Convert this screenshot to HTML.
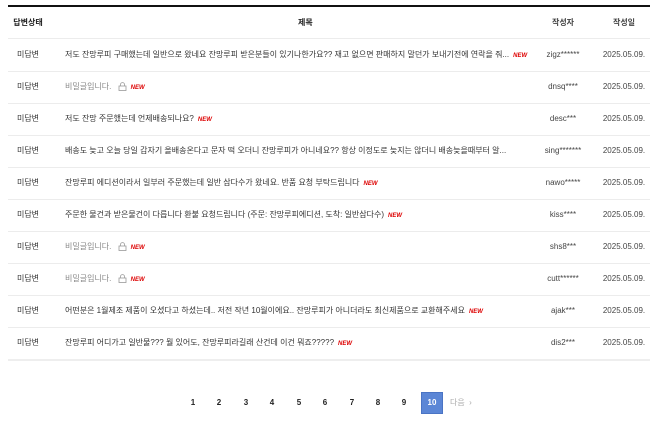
<!DOCTYPE html><html><head><meta charset="utf-8"><style>
body{margin:0;width:658px;height:426px;background:#fff;font-family:"Liberation Sans","Noto Sans CJK KR",sans-serif;color:#333;position:relative;overflow:hidden}
.top{position:absolute;left:8px;top:5px;width:642px;height:2px;background:#111}
.r{position:absolute;left:8px;width:642px;height:32px;border-bottom:1px solid #ececec;font-size:8px}
.r span{position:absolute;top:0;line-height:32px;white-space:nowrap}
.s{left:0;width:40px;text-align:center}
.t{left:57px}
.a{left:515px;width:80px;text-align:center;color:#444}
.d{left:582px;width:68px;text-align:center;color:#444}
.h{font-weight:bold;color:#222}
.g{color:#888}
.n{color:#d00;font-weight:bold;font-style:italic;font-size:6px;margin-left:4px}
.lk{display:inline-block;vertical-align:-2px;margin-left:4px}
.p{position:absolute;top:393px;font-size:8px;font-weight:bold;color:#222;width:20px;height:20px;line-height:20px;text-align:center}
</style></head><body>
<div class="top"></div>
<div class="r h" style="top:7px;height:31px"><span class="s">답변상태</span><span style="left:290px">제목</span><span class="a">작성자</span><span class="d">작성일</span></div>
<div class="r" style="top:39px"><span class="s">미답변</span><span class="t">저도 잔망루피 구매했는데 일반으로 왔네요 잔망루피 받은분들이 있기나한가요?? 재고 없으면 판매하지 말던가 보내기전에 연락을 줘...<i class="n">NEW</i></span><span class="a">zigz******</span><span class="d">2025.05.09.</span></div>
<div class="r" style="top:71px"><span class="s">미답변</span><span class="t g">비밀글입니다. <svg class="lk" width="9" height="9" viewBox="0 0 9 9"><path d="M2.5 4V2.6a2 2 0 0 1 4 0V4" fill="none" stroke="#999" stroke-width=".8"/><rect x="1" y="4" width="7" height="4.5" fill="none" stroke="#999" stroke-width=".8"/></svg><i class="n">NEW</i></span><span class="a">dnsq****</span><span class="d">2025.05.09.</span></div>
<div class="r" style="top:103px"><span class="s">미답변</span><span class="t">저도 잔망 주문했는데 언제배송되나요?<i class="n">NEW</i></span><span class="a">desc***</span><span class="d">2025.05.09.</span></div>
<div class="r" style="top:135px"><span class="s">미답변</span><span class="t">배송도 늦고 오늘 당일 갑자기 올배송온다고 문자 떡 오더니 잔망루피가 아니네요?? 항상 이정도로 늦지는 않더니 배송늦을때부터 알...</span><span class="a">sing*******</span><span class="d">2025.05.09.</span></div>
<div class="r" style="top:167px"><span class="s">미답변</span><span class="t">잔망루피 에디션이라서 일부러 주문했는데 일반 삼다수가 왔네요. 반품 요청 부탁드립니다<i class="n">NEW</i></span><span class="a">nawo*****</span><span class="d">2025.05.09.</span></div>
<div class="r" style="top:199px"><span class="s">미답변</span><span class="t">주문한 물건과 받은물건이 다릅니다 환불 요청드립니다 (주문: 잔망루피에디션, 도착: 일반삼다수)<i class="n">NEW</i></span><span class="a">kiss****</span><span class="d">2025.05.09.</span></div>
<div class="r" style="top:231px"><span class="s">미답변</span><span class="t g">비밀글입니다. <svg class="lk" width="9" height="9" viewBox="0 0 9 9"><path d="M2.5 4V2.6a2 2 0 0 1 4 0V4" fill="none" stroke="#999" stroke-width=".8"/><rect x="1" y="4" width="7" height="4.5" fill="none" stroke="#999" stroke-width=".8"/></svg><i class="n">NEW</i></span><span class="a">shs8***</span><span class="d">2025.05.09.</span></div>
<div class="r" style="top:263px"><span class="s">미답변</span><span class="t g">비밀글입니다. <svg class="lk" width="9" height="9" viewBox="0 0 9 9"><path d="M2.5 4V2.6a2 2 0 0 1 4 0V4" fill="none" stroke="#999" stroke-width=".8"/><rect x="1" y="4" width="7" height="4.5" fill="none" stroke="#999" stroke-width=".8"/></svg><i class="n">NEW</i></span><span class="a">cutt******</span><span class="d">2025.05.09.</span></div>
<div class="r" style="top:295px"><span class="s">미답변</span><span class="t">어떤분은 1월제조 제품이 오셨다고 하셨는데.. 저전 작년 10월이에요.. 잔망루피가 아니더라도 최신제품으로 교환해주세요<i class="n">NEW</i></span><span class="a">ajak***</span><span class="d">2025.05.09.</span></div>
<div class="r" style="top:327px;border-bottom:2px solid #eee"><span class="s">미답변</span><span class="t">잔망루피 어디가고 일반물??? 뭘 있어도, 잔망루피라길래 산건데 이건 뭐죠?????<i class="n">NEW</i></span><span class="a">dis2***</span><span class="d">2025.05.09.</span></div>
<div class="p" style="left:183px">1</div><div class="p" style="left:209px">2</div><div class="p" style="left:236px">3</div><div class="p" style="left:262px">4</div><div class="p" style="left:289px">5</div><div class="p" style="left:315px">6</div><div class="p" style="left:342px">7</div><div class="p" style="left:368px">8</div><div class="p" style="left:394px">9</div>
<div class="p" style="left:421px;background:#5b86d6;color:#fff;border:1px solid #4a74c4;width:20px;height:20px;top:392px">10</div>
<div class="p" style="left:450px;width:34px;color:#aaa;font-weight:normal;text-align:left">다음 &nbsp;›</div>
</body></html>
